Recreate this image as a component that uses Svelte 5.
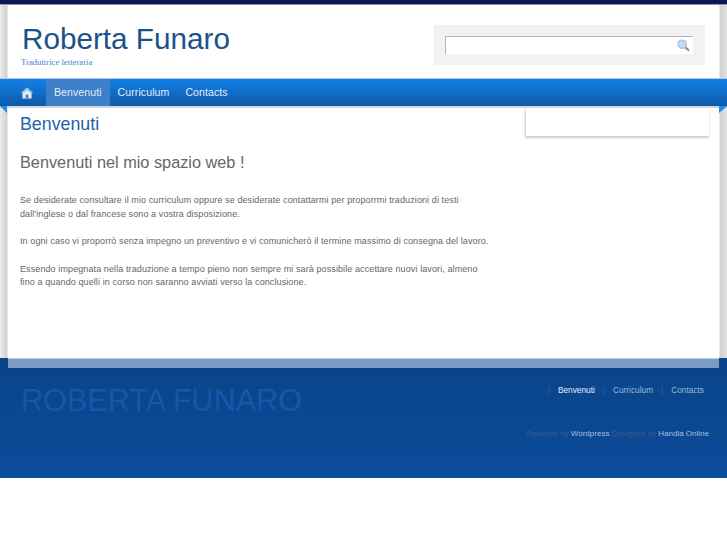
<script>
  const menu = ['Benvenuti', 'Curriculum', 'Contacts'];
</script>

<div class="page">
  <div class="topbar"></div>

  <div class="shell">
    <header class="header">
      <div class="brand">
        <h1>Roberta Funaro</h1>
        <p>Traduttrice letteraria</p>
      </div>
      <div class="search">
        <div class="field">
          <svg width="13" height="13" viewBox="0 0 13 13">
            <circle cx="5.2" cy="5.2" r="4.2" fill="#c4dcf2" stroke="#9dbfdc" stroke-width="1.2" />
            <path d="M8.5 8.5 L12 11.5" stroke="#c9793f" stroke-width="2.2" />
          </svg>
        </div>
      </div>
    </header>
  </div>

  <nav class="nav">
    <a class="home" href="#home" aria-label="Home">
      <svg width="12" height="12" viewBox="0 0 12 12">
        <path d="M6 0.5 L12 6 L10.5 6 L10.5 11.5 L1.5 11.5 L1.5 6 L0 6 Z" fill="#e4edf5" />
        <path d="M4.6 11.5 V7.5 H7.4 V11.5 Z" fill="#5f7f9f" />
        <path d="M6 0.5 L12 6 L9.5 6 L6 3 L2.5 6 L0 6 Z" fill="#8cc4f0" />
      </svg>
    </a>
    {#each menu as item, i}
      <a class:active={i === 0} href="#{item}">{item}</a>
    {/each}
  </nav>

  <div class="shell">
    <main class="main">
      <div class="content">
        <h2>Benvenuti</h2>
        <h3>Benvenuti nel mio spazio web !</h3>
        <p>Se desiderate consultare il mio curriculum oppure se desiderate contattarmi per proporrmi traduzioni di testi<br />dall'inglese o dal francese sono a vostra disposizione.</p>
        <p>In ogni caso vi proporrò senza impegno un preventivo e vi comunicherò il termine massimo di consegna del lavoro.</p>
        <p>Essendo impegnata nella traduzione a tempo pieno non sempre mi sarà possibile accettare nuovi lavori, almeno<br />fino a quando quelli in corso non saranno avviati verso la conclusione.</p>
      </div>
      <aside class="side"></aside>
    </main>
  </div>

  <footer class="footer">
    <div class="band"></div>
    <div class="footer-row">
      <div class="footer-title">ROBERTA FUNARO</div>
      <div class="footer-right">
        <div class="footer-menu">
          {#each menu as item, i}
            <span class="sep">|</span>
            <a class:current={i === 0} href="#{item}">{item}</a>
          {/each}
        </div>
        <div class="credits">Powered by <a href="#wp">Wordpress</a> Designed by <a href="#ho">Handla Online</a></div>
      </div>
    </div>
  </footer>
</div>

<style>
  :global(body) {
    margin: 0;
    background: #fff;
  }
  .page {
    font-family: "Liberation Sans", Arial, sans-serif;
    height: 545px;
    overflow: hidden;
  }
  .topbar {
    height: 4px;
    background: #0a1950;
    border-bottom: 1px solid #8a94b4;
  }
  .shell {
    padding: 0 8px;
    background:
      linear-gradient(90deg, #ececec 0, #d0d0d0 7px, #fff 8px, #fff 719px, #d0d0d0 720px, #e2e2e2 100%);
  }
  .header {
    background: #fff;
    height: 73px;
    display: flex;
    justify-content: space-between;
    align-items: flex-start;
    padding: 0 14px 0 13px;
    box-sizing: border-box;
  }
  .brand h1 {
    margin: 16px 0 0 1px;
    font-size: 29.7px;
    line-height: 36px;
    font-weight: 400;
    color: #1b5287;
  }
  .brand p {
    margin: -1px 0 0;
    font-family: "Liberation Serif", serif;
    font-size: 8.7px;
    line-height: 12px;
    color: #3f83d2;
  }
  .search {
    margin-top: 20px;
    width: 271px;
    height: 40px;
    background: #f2f2f2;
    padding: 11px 12px 0 11px;
    box-sizing: border-box;
  }
  .field {
    height: 17px;
    background: #fff;
    border-top: 1px solid #b4b4b4;
    border-left: 1px solid #b4b4b4;
    display: flex;
    justify-content: flex-end;
    align-items: center;
    padding-right: 3px;
  }
  .nav {
    position: relative;
    height: 27px;
    display: flex;
    padding-left: 14px;
    background: linear-gradient(#1480e8, #0d5aa8);
    border-top: 1px solid #a8c8ee;
    box-shadow: 0 2px 0 #d4d4d4;
  }
  .nav::before,
  .nav::after {
    content: "";
    position: absolute;
    top: 27px;
    border-top: 7px solid #1a8ee8;
    z-index: 1;
  }
  .nav::before {
    left: 0;
    border-left: 7px solid transparent;
  }
  .nav::after {
    right: 0;
    border-right: 8px solid transparent;
  }
  .nav a {
    color: #e6eef7;
    font-size: 10.5px;
    letter-spacing: 0.1px;
    line-height: 27px;
    padding: 0 8px;
    text-decoration: none;
  }
  .nav a.home {
    display: flex;
    align-items: center;
    padding: 0 13px 0 7px;
  }
  .nav a.active {
    background: #3d7fc8;
  }
  .main {
    background: #fff;
    height: 252px;
    display: flex;
    justify-content: space-between;
    align-items: flex-start;
    padding: 0 10px 0 12px;
    box-sizing: border-box;
  }
  .content {
    width: 474px;
  }
  .content h2 {
    margin: 6px 0 0;
    font-size: 17.8px;
    line-height: 24px;
    font-weight: 400;
    color: #1f62ab;
  }
  .content h3 {
    margin: 15px 0 21px;
    font-size: 16.3px;
    line-height: 22px;
    font-weight: 400;
    color: #666;
  }
  .content p {
    margin: 0 0 14px;
    font-size: 9px;
    line-height: 13.6px;
    color: #666;
    letter-spacing: 0.1px;
  }
  .side {
    width: 183px;
    height: 28px;
    margin-top: 2px;
    border-left: 1px solid #d8d8d8;
    box-shadow: 0 2px 2px #ccc;
  }
  .footer {
    height: 120px;
    background: linear-gradient(#0a4489, #0c4c9b);
  }
  .band {
    margin: 0 8px;
    height: 10px;
    background: #7a9cc2;
    border-top: 1px solid #c0cad8;
    box-sizing: border-box;
  }
  .footer-row {
    display: flex;
    justify-content: space-between;
    padding: 0 18px 0 21px;
  }
  .footer-title {
    margin-top: 17px;
    font-size: 30.6px;
    line-height: 30px;
    color: #1558ab;
  }
  .footer-right {
    display: flex;
    flex-direction: column;
    align-items: flex-end;
  }
  .footer-menu {
    margin-top: 16px;
    display: flex;
    gap: 8px;
    padding-right: 5px;
    font-size: 8.3px;
    line-height: 12px;
  }
  .footer-menu .sep {
    color: #3d5f8f;
  }
  .footer-menu a {
    color: #9db8d9;
    text-decoration: none;
  }
  .footer-menu a.current {
    color: #e6eef7;
  }
  .credits {
    margin-top: 32px;
    font-size: 8px;
    line-height: 12px;
    color: #3d5c8a;
  }
  .credits a {
    color: #a8bfdc;
    text-decoration: none;
  }
</style>
